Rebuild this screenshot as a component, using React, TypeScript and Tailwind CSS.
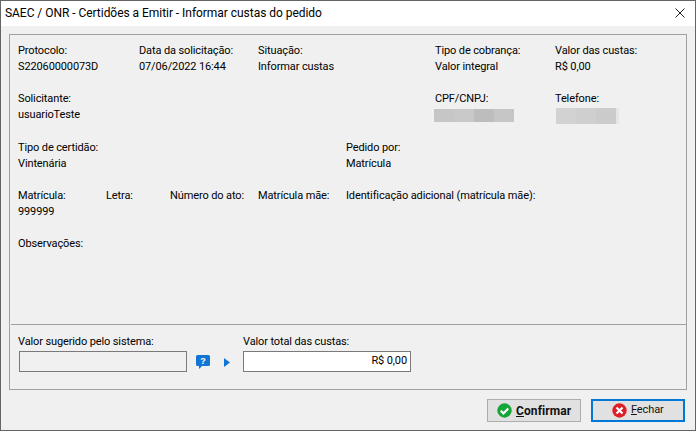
const Field = ({ label, value, className = "" }: { label: string; value?: React.ReactNode; className?: string }) => (
  <div className={className}>
    <div className="h-4 leading-4 whitespace-nowrap">{label}</div>
    {value !== undefined && <div className="h-4 leading-4 whitespace-nowrap">{value}</div>}
  </div>
);

const Redacted = ({ className, tones }: { className: string; tones: string[] }) => (
  <div className={`flex ${className}`}>
    {tones.map((t, i) => (
      <div key={i} className={t} />
    ))}
  </div>
);

const HelpIcon = () => (
  <svg width="14" height="14" viewBox="0 0 14 14">
    <path d="M1.5 0h11A1.5 1.5 0 0 1 14 1.5v8a1.5 1.5 0 0 1-1.5 1.5H6L3 14v-3H1.5A1.5 1.5 0 0 1 0 9.500v-8A1.500 1.500 0 0 1 1.500 0z" fill="#1277d4" />
    <text x="7" y="9" textAnchor="middle" fontSize="9" fontWeight="700" fill="#ffffff" fontFamily="Liberation Sans, sans-serif">?</text>
  </svg>
);

const CheckIcon = () => (
  <svg width="15" height="15" viewBox="0 0 15 15">
    <circle cx="7.5" cy="7.5" r="7.2" fill="#13a538" />
    <path d="M3.8 7.800l2.600 2.600 4.800-5" fill="none" stroke="#ffffff" strokeWidth="2.200" />
  </svg>
);

const CloseIcon = () => (
  <svg width="15" height="15" viewBox="0 0 15 15">
    <circle cx="7.5" cy="7.5" r="7.2" fill="#dc2026" />
    <path d="M4.500 4.500l6 6M10.500 4.500l-6 6" fill="none" stroke="#ffffff" strokeWidth="2.200" />
  </svg>
);

export default function App() {
  return (
    <div
      className="w-[696px] h-[431px] overflow-hidden flex flex-col bg-[#f0f0f0] border border-[#646464] text-black text-[11px] tracking-[-0.12px]"
      style={{ fontFamily: "Roboto, sans-serif" }}
    >
      <div className="h-[25px] shrink-0 bg-white flex items-center justify-between pl-[4px] pr-[10px] pb-[1px] text-[12px] tracking-[-0.04px]">
        <span className="whitespace-nowrap">SAEC / ONR - Certidões a Emitir - Informar custas do pedido</span>
        <svg width="10" height="10" viewBox="0 0 10 10">
          <path d="M0.5 0.5l9 9M9.500 0.500l-9 9" stroke="#222" strokeWidth="1" fill="none" />
        </svg>
      </div>

      <div className="mt-2 mx-2 w-[678px] h-[356px] border border-[#a0a0a0] flex flex-col">
        <div className="flex-1 pl-2 pt-[8px] flex flex-col gap-4">
          <div className="flex">
            <Field className="w-[121px]" label="Protocolo:" value="S22060000073D" />
            <Field className="w-[119px]" label="Data da solicitação:" value="07/06/2022 16:44" />
            <Field className="w-[177px]" label="Situação:" value="Informar custas" />
            <Field className="w-[120px]" label="Tipo de cobrança:" value="Valor integral" />
            <Field label="Valor das custas:" value="R$ 0,00" />
          </div>
          <div className="flex">
            <Field className="w-[417px]" label="Solicitante:" value="usuarioTeste" />
            <div className="w-[120px]">
              <div className="h-4 leading-4">CPF/CNPJ:</div>
              <Redacted className="w-[80px] h-[13px] mt-0.5 -ml-px" tones={["w-[20px] bg-[#c6c6c6]", "w-[20px] bg-[#c9c9c9]", "w-[20px] bg-[#bdbdbd]", "w-[20px] bg-[#c6c6c6]"]} />
            </div>
            <div>
              <div className="h-4 leading-4">Telefone:</div>
              <Redacted className="w-[63px] h-[16px] mt-px ml-px" tones={["w-[20px] bg-[#d2d2d2]", "w-[20px] bg-[#cfcfcf]", "w-[20px] bg-[#cbcbcb]", "w-[3px] bg-[#e6e6e6]"]} />
            </div>
          </div>
          <div className="flex">
            <Field className="w-[328px]" label="Tipo de certidão:" value="Vintenária" />
            <Field label="Pedido por:" value="Matrícula" />
          </div>
          <div className="flex">
            <Field className="w-[88px]" label="Matrícula:" value="999999" />
            <Field className="w-[64px]" label="Letra:" />
            <Field className="w-[88px]" label="Número do ato:" />
            <Field className="w-[88px]" label="Matrícula mãe:" />
            <Field label="Identificação adicional (matrícula mãe):" />
          </div>
          <Field label="Observações:" />
        </div>

        <div className="h-[65px] shrink-0 ml-[1px] border-t border-[#a0a0a0] pl-[7px] pt-[9px]">
          <div className="flex items-end">
            <div className="w-[169px]">
              <div className="h-4 leading-4 mb-[1px]">Valor sugerido pelo sistema:</div>
              <div className="ml-px w-[168px] h-[21px] border border-[#7a7a7a] bg-[#f0f0f0]" />
            </div>
            <div className="w-[56px] h-[21px] flex items-center pl-[9px] pt-px">
              <HelpIcon />
              <svg className="ml-[14px]" width="6" height="9" viewBox="0 0 6 9">
                <path d="M0 0L6 4.500L0 9z" fill="#1277d4" />
              </svg>
            </div>
            <div>
              <div className="h-4 leading-4 mb-[1px]">Valor total das custas:</div>
              <div className="w-[168px] h-[21px] border border-[#7a7a7a] bg-white flex items-center justify-end pr-[3px]">R$ 0,00</div>
            </div>
          </div>
        </div>
      </div>

      <div className="flex justify-end gap-[10px] mt-[9px] pr-[10px]">
        <div className="w-[94px] h-[23px] border border-[#adadad] bg-[#e1e1e1] flex items-center pl-[9px] gap-[4px] font-bold text-[12px] tracking-[0.1px] text-[#111]">
          <CheckIcon />
          <span><span className="underline">C</span>onfirmar</span>
        </div>
        <div className="w-[94px] h-[23px] border-2 border-[#0078d7] bg-[#e1e1e1] flex items-center pl-[19px] gap-[4px] text-[#111]">
          <CloseIcon />
          <span><span className="underline">F</span>echar</span>
        </div>
      </div>
    </div>
  );
}
